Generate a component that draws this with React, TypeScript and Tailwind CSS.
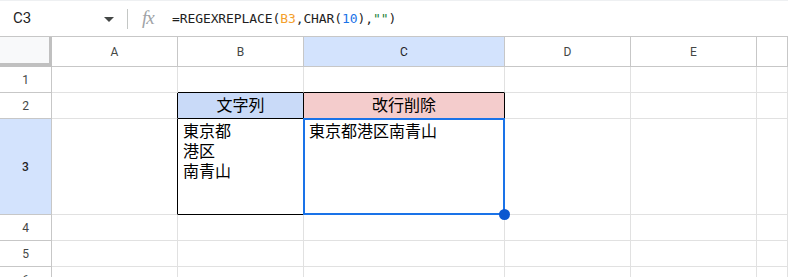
const cols = ["A", "B", "C", "D", "E", ""];
const rowHeights = [26, 26, 96, 26, 26, 26];

const cjk = "font-['Arial','Noto_Sans_CJK_JP',sans-serif]";

function Cell({ row, col }: { row: number; col: number }) {
    // black outline around B2:C3
    const rb = (row >= 2 && row <= 3 && col >= 0 && col <= 2) ? "border-r-black" : "border-r-[#e1e1e1]";
    const bb = ((row === 1 || row === 2 || row === 3) && (col === 1 || col === 2)) ? "border-b-black" : "border-b-[#e1e1e1]";
    const base = `relative border-r border-b ${rb} ${bb} ${cjk} text-[16px] text-[#000] leading-[20px]`;

    if (row === 2 && col === 1) {
        return <div className={`${base} bg-[#c9daf8] flex items-center justify-center`}>文字列</div>;
    }
    if (row === 2 && col === 2) {
        return <div className={`${base} bg-[#f4cccc] flex items-center justify-center`}>改行削除</div>;
    }
    if (row === 3 && col === 1) {
        return (
            <div className={`${base} pl-[5px] pt-[3px]`}>
                <div>東京都</div>
                <div>港区</div>
                <div>南青山</div>
            </div>
        );
    }
    if (row === 3 && col === 2) {
        return (
            <div className={`${base} pl-[5px] pt-[3px]`}>
                <div>東京都港区南青山</div>
                <div className="absolute -left-px -top-px -right-px -bottom-px border-2 border-[#1a73e8]" />
                <div className="absolute -right-[6px] -bottom-[6px] w-[11px] h-[11px] rounded-full bg-[#0b57d0] z-10" />
            </div>
        );
    }
    return <div className={base} />;
}

export default function App() {
    return (
        <div className="w-[788px] h-[277px] overflow-hidden bg-white font-['Roboto',sans-serif]">
            {/* formula bar */}
            <div className="h-[37px] flex items-center border-t border-t-[#eef0f2] border-b border-b-[#c7c7c7]">
                <div className="w-[127px] flex items-center pl-[13px] pr-[13px]">
                    <span className="flex-1 text-[15px] text-[#1f1f1f]">C3</span>
                    <svg width="10" height="5" viewBox="0 0 10 5" className="mt-[1px]">
                        <path d="M0 0 L10 0 L5 5 Z" fill="#444746" />
                    </svg>
                </div>
                <div className="w-px h-[20px] bg-[#c4c7c5]" />
                <span className="ml-[14px] w-[18px] font-['Liberation_Serif',serif] italic text-[19px] text-[#a0a3a6] tracking-[-1px]">fx</span>
                <span className="ml-[12px] font-['DejaVu_Sans_Mono',monospace] text-[13px] text-[#1f1f1f] tracking-[-0.1px]">
                    =REGEXREPLACE(<span className="text-[#f4a02c]">B3</span>,CHAR(<span className="text-[#1a73e8]">10</span>),<span className="text-[#188038]">""</span>)
                </span>
            </div>

            {/* grid */}
            <div className="grid grid-cols-[52px_126px_126px_201px_126px_126px_1fr] grid-rows-[30px_26px_26px_96px_26px_26px_26px]">
                <div className="bg-[#f8f9fa] border-r-[3px] border-b-[4px] border-[#c0c0c0]" />
                {cols.map((c, i) => (
                    <div
                        key={c + i}
                        className={`flex items-center justify-center text-[12px] border-b border-b-[#c7c7c7] border-r border-r-[#c7c7c7] ${
                            c === "C" ? "bg-[#d3e3fd] text-[#1f1f1f]" : "bg-white text-[#444746]"
                        }`}
                    >
                        {c}
                    </div>
                ))}
                {rowHeights.map((_, r) => (
                    <div key={r} className="contents">
                        <div
                            className={`flex items-center justify-center text-[12px] border-r border-r-[#c7c7c7] border-b border-b-[#c7c7c7] ${
                                r === 2 ? "bg-[#d3e3fd] text-[#1f1f1f] font-medium" : "bg-white text-[#444746]"
                            }`}
                        >
                            {r + 1}
                        </div>
                        {cols.map((_, ci) => (
                            <Cell key={ci} row={r + 1} col={ci} />
                        ))}
                    </div>
                ))}
            </div>
        </div>
    );
}
